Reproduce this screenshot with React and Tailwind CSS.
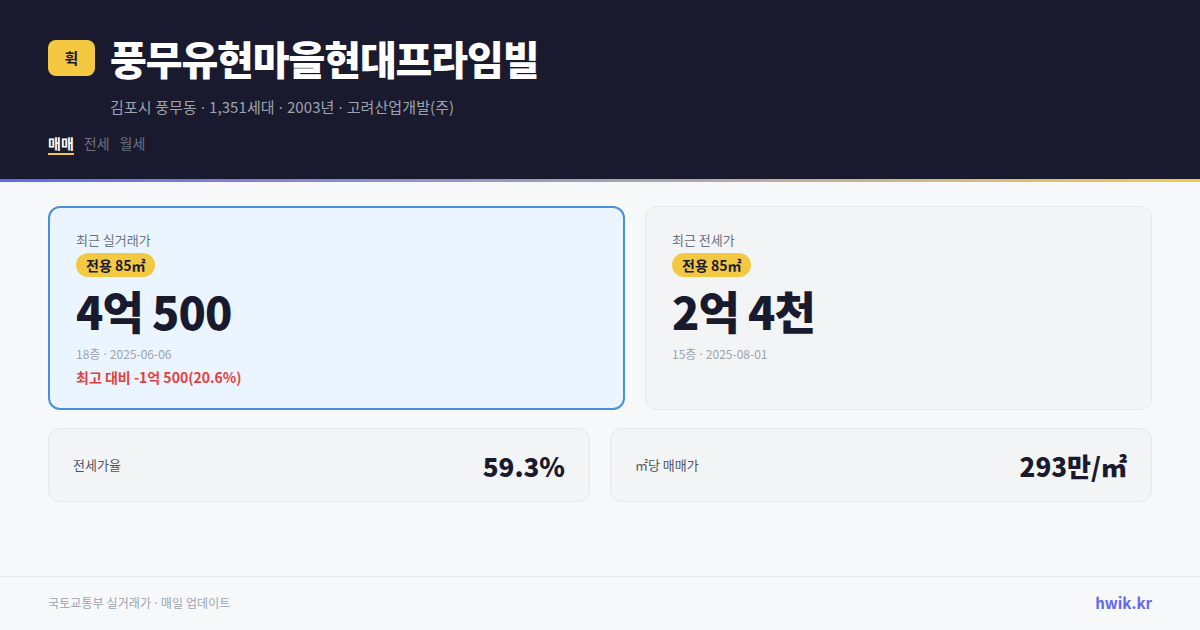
import React from "react";

const font = { fontFamily: '"Noto Sans CJK KR", "Noto Sans", sans-serif' };

function Dot() {
  return <span className="font-['Noto_Sans',sans-serif]"> · </span>;
}

export default function App() {
  return (
    <div style={font} className="w-[1200px] h-[630px] bg-[#f7f8fa] flex flex-col overflow-hidden">
      <header className="bg-[#1a1a2e] px-12 pt-[34px] pb-[24px]">
        <div className="flex items-center gap-[15px] h-[48px]">
          <div className="w-[47px] h-[36px] rounded-lg bg-[#f5c842] flex items-center justify-center text-[15px] font-bold text-[#1a1a2e]">휙</div>
          <h1 className="text-[40px] leading-[48px] font-black text-white tracking-[-1.1px]">풍무유현마을현대프라임빌</h1>
        </div>
        <div className="ml-[62px] mt-[14px] text-[15px] leading-[22px] text-[#9ca3af] tracking-[0.1px]">
          김포시 풍무동<Dot />1,351세대<Dot />2003년<Dot />고려산업개발(주)
        </div>
        <div className="mt-[15px] flex gap-[10px] text-[14px] leading-[20px]">
          <span className="text-white font-bold border-b-2 border-[#f5c842]">매매</span>
          <span className="text-[#6b7280]">전세</span>
          <span className="text-[#6b7280]">월세</span>
        </div>
      </header>
      <div className="h-[3px] bg-gradient-to-r from-[#6366f1] to-[#f5c842]" />
      <main className="flex-1 px-12 pt-[24px]">
        <div className="grid grid-cols-[577px_1fr] gap-5">
          <div className="h-[204px] rounded-xl border-2 border-[#4a90d9] bg-[#ebf5ff] px-[26px] pt-[22px]">
            <div className="text-[13px] leading-[20px] text-[#6b7280]">최근 실거래가</div>
            <div className="mt-[3px] inline-flex items-center h-[24px] px-[10px] rounded-full bg-[#f5c842] text-[14px] font-bold text-[#1a1a2e]">전용 85㎡</div>
            <div className="mt-[8px] text-[45px] leading-[52px] font-black text-[#1a1a2e] tracking-[-1px]">4억 500</div>
            <div className="mt-[8px] text-[12px] leading-[18px] text-[#9ca3af]">18층<Dot />2025-06-06</div>
            <div className="mt-[3px] text-[14px] leading-[20px] font-bold text-[#e53e3e]">최고 대비 -1억 500(20.6%)</div>
          </div>
          <div className="h-[204px] rounded-xl border border-[#e5e7eb] bg-[#f3f4f6] px-[26px] pt-[23px]">
            <div className="text-[13px] leading-[20px] text-[#6b7280]">최근 전세가</div>
            <div className="mt-[3px] inline-flex items-center h-[24px] px-[10px] rounded-full bg-[#f5c842] text-[14px] font-bold text-[#1a1a2e]">전용 85㎡</div>
            <div className="mt-[8px] text-[45px] leading-[52px] font-black text-[#1a1a2e] tracking-[-1px]">2억 4천</div>
            <div className="mt-[8px] text-[12px] leading-[18px] text-[#9ca3af]">15층<Dot />2025-08-01</div>
          </div>
        </div>
        <div className="mt-[18px] grid grid-cols-2 gap-5">
          <div className="h-[74px] rounded-xl border border-[#e5e7eb] bg-[#f3f4f6] px-6 flex items-center justify-between">
            <span className="text-[13px] text-[#4b5563]">전세가율</span>
            <span className="text-[26px] font-extrabold text-[#1a1a2e]">59.3%</span>
          </div>
          <div className="h-[74px] rounded-xl border border-[#e5e7eb] bg-[#f3f4f6] px-6 flex items-center justify-between">
            <span className="text-[13px] text-[#4b5563]">㎡당 매매가</span>
            <span className="text-[26px] font-extrabold text-[#1a1a2e]">293만/㎡</span>
          </div>
        </div>
      </main>
      <footer className="h-[54px] border-t border-[#e5e7eb] px-12 flex items-center justify-between">
        <span className="text-[12px] text-[#9ca3af] tracking-[0.1px]">국토교통부 실거래가<Dot />매일 업데이트</span>
        <span className="text-[15px] font-bold text-[#6366f1]">hwik.kr</span>
      </footer>
    </div>
  );
}
